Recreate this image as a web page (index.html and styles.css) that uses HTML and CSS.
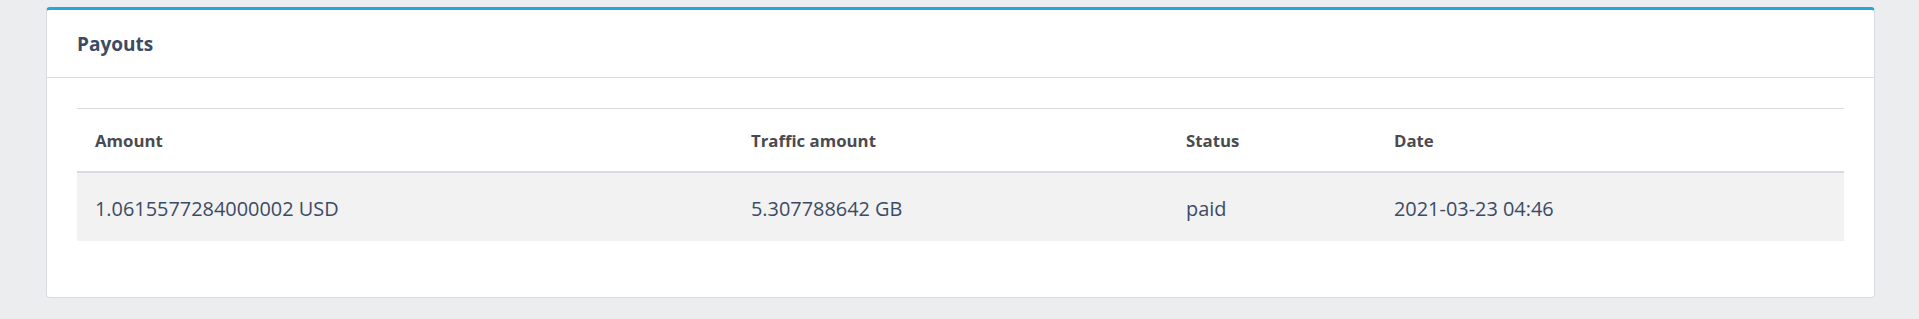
FILE: index.html
```html
<!DOCTYPE html>
<html lang="en">
<head>
<meta charset="utf-8">
<title>Payouts</title>
<link rel="stylesheet" href="styles.css">
</head>
<body>
<div class="page">
  <div class="card">
    <div class="card-header">Payouts</div>
    <div class="card-body">
      <table class="payouts">
        <colgroup>
          <col class="c-amount">
          <col class="c-traffic">
          <col class="c-status">
          <col class="c-date">
        </colgroup>
        <thead>
          <tr>
            <th>Amount</th>
            <th>Traffic amount</th>
            <th>Status</th>
            <th>Date</th>
          </tr>
        </thead>
        <tbody>
          <tr>
            <td>1.0615577284000002 USD</td>
            <td>5.307788642 GB</td>
            <td>paid</td>
            <td>2021-03-23 04:46</td>
          </tr>
        </tbody>
      </table>
    </div>
  </div>
</div>
</body>
</html>
```

FILE: styles.css
```css
html, body {
  margin: 0;
  padding: 0;
  background: #ebedef;
  font-family: "Open Sans", "Noto Sans", "Liberation Sans", sans-serif;
}

.page {
  padding: 7px 44px 0 46px;
}

.card {
  background: #ffffff;
  border: 1px solid #d8dbe0;
  border-top: 3px solid #23a8d9;
  border-radius: 4px;
}

.card-header {
  height: 67px;
  display: flex;
  align-items: center;
  padding: 0 30px;
  border-bottom: 1px solid #d8dbe0;
  color: #3c4b64;
  font-size: 19px;
  font-weight: 700;
}

.card-body {
  padding: 30px 30px 56px;
}

.payouts {
  width: 100%;
  border-collapse: collapse;
  table-layout: fixed;
}

.c-amount { width: 656px; }
.c-traffic { width: 435px; }
.c-status { width: 208px; }
.c-date { width: auto; }

.payouts th {
  height: 62px;
  padding: 0 18px;
  text-align: left;
  vertical-align: middle;
  color: #4a4a4f;
  font-size: 16.8px;
  font-weight: 700;
  border-top: 1px solid #d8dbe0;
  border-bottom: 2px solid #d8dbe0;
}

.payouts td {
  height: 66px;
  padding: 2px 18px 0;
  vertical-align: middle;
  color: #3c4b64;
  font-size: 19.9px;
  background: #f2f2f3;
}
```
